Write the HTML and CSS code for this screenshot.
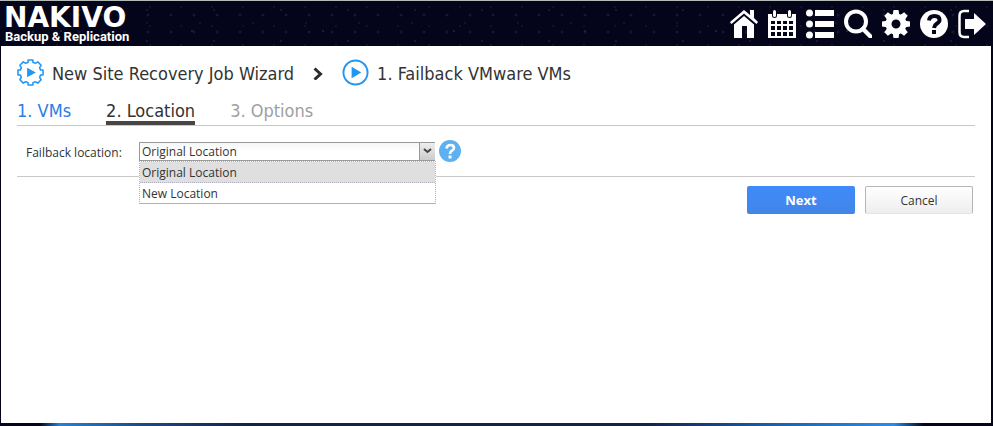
FILE: index.html
```
<!DOCTYPE html>
<html lang="en">
  <head>
    <meta charset="UTF-8" />
    <meta name="viewport" content="width=device-width, initial-scale=1.0" />
    <link rel="stylesheet" href="styles.css">
    <title>New Site Recovery Job Wizard</title>
  </head>
  <body>
    <header class="header">
      <a class="logo" href="#">
        <span class="logo__name">NAKIVO</span>
        <span class="logo__product">Backup &amp; Replication</span>
      </a>
      <nav class="menu">
        <a class="menu__link" href="#" aria-label="Home">
          <svg class="menu__icon" viewBox="0 0 28 30">
            <path d="M0 13 14 1l6 5V1h4v8l4 4-1.500 2L14 4.500 1.500 15z" />
            <path d="M4 15.500 14 7l10 8.500V29h-7V17h-5v12H4z" />
          </svg>
        </a>
        <a class="menu__link" href="#" aria-label="Calendar">
          <svg class="menu__icon" viewBox="0 0 28 30">
            <path fill-rule="evenodd" d="M0 5h4v2q0 2 2.500 2T9 7V5h10v2q0 2 2.500 2T24 7V5h4v24H0zM3 12v3h4v-3zM9 12v3h4v-3zM15 12v3h4v-3zM21 12v3h4v-3zM3 17v4h4v-4zM9 17v4h4v-4zM15 17v4h4v-4zM21 17v4h4v-4zM3 23v4h4v-4zM9 23v4h4v-4zM15 23v4h4v-4zM21 23v4h4v-4z" />
            <rect x="5" y="1" width="3" height="7" rx="1.500" />
            <rect x="20" y="1" width="3" height="7" rx="1.500" />
          </svg>
        </a>
        <a class="menu__link" href="#" aria-label="Activities">
          <svg class="menu__icon" viewBox="0 0 28 30">
            <circle cx="3.500" cy="4" r="3.500" />
            <circle cx="3.500" cy="15" r="3.500" />
            <circle cx="3.500" cy="26" r="3.500" />
            <path d="M9 1h19v6H9zM9 12h19v6H9zM9 23h19v6H9z" />
          </svg>
        </a>
        <a class="menu__link" href="#" aria-label="Search">
          <svg class="menu__icon" viewBox="0 0 28 30">
            <circle cx="12" cy="12.500" r="10" fill="none" stroke="#fff" stroke-width="4" />
            <path d="m16 20 3-3 9 9v3h-3z" />
          </svg>
        </a>
        <a class="menu__link" href="#" aria-label="Settings">
          <svg class="menu__icon" viewBox="0 0 28 30">
            <circle cx="14" cy="15" r="7.500" fill="none" stroke="#fff" stroke-width="6" />
            <g id="teeth">
              <path d="M11.500 1h5l1 6h-7zM11.500 29h5l1-6h-7z" />
              <path d="M0 12.500v5l6 1v-7zM28 12.500v5l-6 1v-7z" />
            </g>
            <use href="#teeth" transform="rotate(45 14 15)" />
          </svg>
        </a>
        <a class="menu__link" href="#" aria-label="Help">
          <svg class="menu__icon" viewBox="0 0 28 30">
            <circle cx="14" cy="15" r="14" />
            <path d="M9 11.500q.5-4.500 5.500-4.500t5 4q0 2-2.500 3.500T14 19" fill="none" stroke="#04051a" stroke-width="4" />
            <rect x="12" y="21" width="4" height="4" fill="#04051a" />
          </svg>
        </a>
        <a class="menu__link" href="#" aria-label="Log out">
          <svg class="menu__icon" viewBox="0 0 28 30">
            <path d="M11 2H6Q1.500 2 1.500 7v16q0 5 4.500 5h5" fill="none" stroke="#fff" stroke-width="2.500" />
            <path d="M7 10h9V4l12 11-12 11v-6H7z" />
          </svg>
        </a>
      </nav>
    </header>

    <main class="wizard">
      <div class="crumbs">
        <svg class="crumbs__icon" viewBox="0 0 28 28">
          <path d="M11.500 3.500V1h5v2.500l2.500 1L21.500 3 25 6.500 23.500 9l1 2.500H27v5h-2.500l-1 2.500 1.500 2.500-3.500 3.500-2.500-1.500-2.500 1V27h-5v-2.500L9 23.500 6.500 25 3 21.500 4.500 19l-1-2.500H1v-5h2.500l1-2.500L3 6.500 6.500 3 9 4.500z" fill="none" stroke="#2196f3" stroke-width="1.600" stroke-linejoin="round" />
          <path d="m10.500 9 9 5-9 5z" fill="#2196f3" />
        </svg>
        <h1 class="crumbs__title">New Site Recovery Job Wizard</h1>
        <svg class="crumbs__arrow" viewBox="0 0 10 14">
          <path d="m1.500 2.500 6 5.500-6 5.500" fill="none" stroke="#2b2b2b" stroke-width="3" />
        </svg>
        <svg class="crumbs__icon" viewBox="0 0 28 28">
          <circle cx="14" cy="14" r="12.500" fill="none" stroke="#2196f3" stroke-width="2" />
          <path d="m10 8 10 6-10 6z" fill="#2196f3" />
        </svg>
        <h2 class="crumbs__title">1. Failback VMware VMs</h2>
      </div>

      <nav class="steps">
        <a class="steps__item steps__item_done" href="#">1. VMs</a>
        <a class="steps__item steps__item_current" href="#">2. Location</a>
        <a class="steps__item" href="#">3. Options</a>
      </nav>

      <form class="form">
        <div class="field">
          <label class="field__label" for="location">Failback location:</label>
          <div class="combo">
            <select class="combo__select" id="location">
              <option>Original Location</option>
              <option>New Location</option>
            </select>
            <svg class="combo__arrow" viewBox="0 0 15 17">
              <path d="m4 6 3.500 3L11 6" fill="none" stroke="#444" stroke-width="2" />
            </svg>
            <ul class="combo__list">
              <li class="combo__option combo__option_active">Original Location</li>
              <li class="combo__option">New Location</li>
            </ul>
          </div>
          <button class="hint" type="button" aria-label="Help">
            <svg class="hint__icon" viewBox="0 0 22 22">
              <circle cx="11" cy="11" r="11" fill="#5eb1f1" />
              <path d="M7.500 8.500q.5-3.500 4-3.500t3.500 3q0 1.500-2 2.600T11 14" fill="none" stroke="#fff" stroke-width="2.600" />
              <rect x="9.500" y="15.500" width="3" height="3" fill="#fff" />
            </svg>
          </button>
        </div>
        <div class="actions">
          <button class="button button_primary" type="button">Next</button>
          <button class="button" type="button">Cancel</button>
        </div>
      </form>
    </main>
  </body>
</html>
```
FILE: styles.css
```
*,
*::after,
*::before {
  box-sizing: border-box;
  margin: 0;
  padding: 0;
}

a {
  color: inherit;
  text-decoration: none;
}

ul {
  list-style: none;
}

body {
  display: flex;
  flex-direction: column;
  min-height: 100vh;
  padding: 0 2px 3px 1px;
  border-top: 1px solid #b4bab8;
  font-family: "Open Sans", "Noto Sans", sans-serif;
  font-size: 12px;
  color: #333;
  background:
    linear-gradient(90deg, #04051a 4%, #2a7fd0 6%, #1d4c82 14%, #10234a 25%, #10234a 65%, #1d5fa8 78%, #2a8ce8 90%, #04051a 93%) bottom / 100% 3px no-repeat,
    #04051a;
}

.header {
  display: flex;
  justify-content: space-between;
  align-items: center;
  height: 45px;
  padding: 0 5px 0 3px;
  color: #fff;
  background:
    radial-gradient(circle at 12px 9px, #45465c 0, transparent 1px) 0 0 / 67px 31px,
    radial-gradient(circle at 40px 22px, #34354a 0, transparent 1px) 0 0 / 53px 37px,
    radial-gradient(circle at 25px 6px, #2c2d45 0, transparent 1px) 0 0 / 31px 19px,
    radial-gradient(circle at 9px 14px, #202138 0, transparent 2px) 0 0 / 23px 17px,
    radial-gradient(circle at 60px 30px, #5a5a68 0, transparent 1px) 0 0 / 131px 43px,
    #04051a;
}

.logo {
  display: flex;
  flex-direction: column;
  padding-top: 2px;
}

.logo__name {
  font-family: "DejaVu Sans", sans-serif;
  font-size: 28px;
  font-weight: 700;
  line-height: 24px;
}

.logo__product {
  padding-left: 1px;
  font-family: Roboto, sans-serif;
  font-size: 13px;
  font-weight: 700;
  line-height: 14px;
}

.menu {
  display: flex;
  gap: 10px;
}

.menu__icon {
  display: block;
  width: 28px;
  height: 30px;
  fill: #fff;
}

.wizard {
  flex: 1;
  padding: 11px 16px;
  background: #fff;
}

.crumbs {
  display: flex;
  align-items: center;
  height: 31px;
}

.crumbs__icon {
  width: 27px;
  height: 27px;
}

.crumbs__title {
  margin-left: 8px;
  padding-top: 2px;
  font-family: "DejaVu Sans Condensed", "DejaVu Sans", sans-serif;
  font-size: 18px;
  font-weight: 400;
}

.crumbs__arrow {
  width: 10px;
  height: 14px;
  margin: 0 19px;
}

.steps {
  display: flex;
  gap: 35px;
  height: 38px;
  align-items: flex-end;
  border-bottom: 1px solid #c8c8c8;
  font-family: "DejaVu Sans Condensed", "DejaVu Sans", sans-serif;
  font-size: 18px;
  line-height: 20px;
  color: #a0a0a0;
}

.steps__item {
  border-bottom: 4px solid transparent;
}

.steps__item_done {
  color: #2b7de9;
}

.steps__item_current {
  color: #333;
  border-color: #4a4545;
}

.field {
  display: flex;
  align-items: center;
  height: 51px;
  padding-left: 9px;
  border-bottom: 1px solid #c8c8c8;
}

.field__label {
  width: 113px;
  padding-top: 2px;
}

.combo {
  position: relative;
  width: 296px;
}

.combo__select {
  display: block;
  appearance: none;
  width: 100%;
  height: 19px;
  padding: 0 18px 0 2px;
  border: 1px solid #999;
  border-radius: 0;
  font: inherit;
  color: #333;
  background: linear-gradient(#f4f7f6, #fff 8px);
}

.combo__arrow {
  position: absolute;
  top: 1px;
  right: 0;
  width: 16px;
  height: 17px;
  border-left: 1px solid #999;
  background: linear-gradient(#eee, #ccc);
  pointer-events: none;
}

.combo__list {
  position: absolute;
  top: 100%;
  left: 0;
  width: 297px;
  border: 1px dotted #b0b0c0;
  border-bottom: none;
  background: #fff;
}

.combo__option {
  height: 21px;
  padding-left: 2px;
  border-bottom: 1px solid #b0b0c0;
  line-height: 22px;
}

.combo__option_active {
  border-bottom-style: dotted;
  background: #dfdfdf;
}

.hint {
  margin-left: 4px;
  border: none;
  background: none;
  cursor: pointer;
}

.hint__icon {
  display: block;
  width: 22px;
  height: 22px;
}

.actions {
  display: flex;
  justify-content: flex-end;
  gap: 10px;
  padding: 9px 2px;
}

.button {
  width: 108px;
  height: 28px;
  border: 1px solid #b8b4b4;
  border-bottom-color: #e4e4e4;
  border-radius: 2px;
  font: inherit;
  color: #333;
  background: linear-gradient(#fff, #eee);
  cursor: pointer;
}

.button_primary {
  border: none;
  font-size: 13px;
  font-weight: 700;
  color: #fff;
  background: linear-gradient(#3f8bfb, #4285e8);
}
```
